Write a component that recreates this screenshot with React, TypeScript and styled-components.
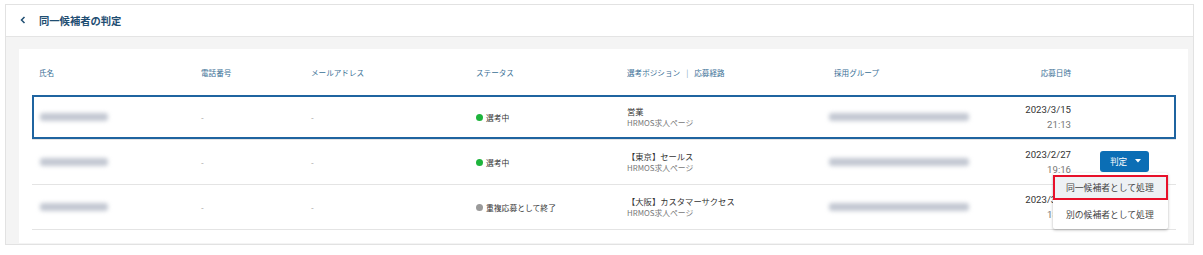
import styled, { createGlobalStyle } from "styled-components"

const GlobalStyle = createGlobalStyle`
  body {
    margin: 0;
    background: #ffffff;
    font-family: "Noto Sans CJK JP", "Noto Sans", sans-serif;
    color: #333;
  }
`

const Page = styled.div`
  padding: 4px 9px 0 5px;
  width: 1203px;
  box-sizing: border-box;
`

const Panel = styled.section`
  border: 1px solid #e2e2e2;
  background: #f4f4f4;
  height: 241px;
  box-sizing: border-box;
  display: flex;
  flex-direction: column;
`

const Header = styled.header`
  height: 32px;
  flex: none;
  background: #fff;
  border-bottom: 1px solid #e4e4e4;
  box-sizing: border-box;
  display: flex;
  align-items: center;
  padding-left: 13px;
  padding-bottom: 1px;
  gap: 12px;
`

const BackIcon = styled.svg`
  width: 8px;
  height: 8px;
`

const Title = styled.h1`
  margin: 0;
  font-size: 10.3px;
  font-weight: 700;
  color: #1f4e72;
`

const Body = styled.div`
  flex: 1;
  padding: 12px 5px 1px 13px;
  display: flex;
`

const Card = styled.div`
  flex: 1;
  background: #fff;
  padding: 0 12px 0 13px;
`

const cols = "162px 110px 165px 151px 199px 141px 104px 1fr"

const HeadRow = styled.div`
  display: grid;
  grid-template-columns: ${cols};
  padding-left: 7px;
  height: 46px;
  align-items: center;
`

const HeadCell = styled.div<{ $right?: boolean; $indent?: number }>`
  font-size: 7.6px;
  color: #3a6f96;
  text-align: ${p => (p.$right ? "right" : "left")};
  padding-left: ${p => p.$indent ?? 0}px;
`

const Sep = styled.span`
  margin: 0 6px;
  color: #7aa0bd;
`

const Row = styled.div<{ $selected?: boolean }>`
  position: relative;
  display: grid;
  grid-template-columns: ${cols};
  padding-left: 7px;
  height: 45px;
  align-items: center;
  box-sizing: border-box;
  border-bottom: 1px solid #e4e4e4;
  box-shadow: ${p => (p.$selected ? "inset 0 0 0 2px #1f64a0" : "none")};
`

const Blur = styled.div<{ $w: number }>`
  width: ${p => p.$w}px;
  height: 8px;
  background: #c3c8d2;
  border-radius: 3px;
  filter: blur(2.2px);
  margin-left: ${p => (p.$w > 100 ? "3px" : "1px")};
`

const Dash = styled.div`
  font-size: 8px;
  color: #9a9a9a;
`

const Status = styled.div<{ $done?: boolean }>`
  display: flex;
  align-items: center;
  gap: 3px;
  font-size: 7.8px;
  color: #333;
  &::before {
    content: "";
    width: 7px;
    height: 7px;
    border-radius: 50%;
    background: ${p => (p.$done ? "#9a9a9a" : "#1eb43c")};
  }
`

const Stack = styled.div<{ $right?: boolean }>`
  display: flex;
  flex-direction: column;
  align-items: ${p => (p.$right ? "flex-end" : "flex-start")};
`

const Main = styled.div`
  font-size: 8.3px;
  line-height: 11px;
  color: #333;
`

const Sub = styled.div`
  font-size: 7.8px;
  line-height: 11px;
  color: #777;
`

const DateMain = styled.div`
  font-family: Roboto, "Liberation Sans", sans-serif;
  font-size: 9.6px;
  line-height: 15px;
  color: #333;
`

const DateSub = styled(DateMain)`
  color: #777;
`

const Action = styled.div`
  position: relative;
  padding-left: 29px;
  align-self: stretch;
  display: flex;
  align-items: center;
`

const JudgeButton = styled.button`
  width: 49px;
  height: 21px;
  border: none;
  border-radius: 3px;
  background: #0b6eb5;
  color: #fff;
  font-family: "Noto Sans CJK JP", sans-serif;
  font-size: 8.6px;
  display: flex;
  align-items: center;
  justify-content: center;
  gap: 8px;
  padding: 0 0 0 2px;
  margin-top: -2px;
`

const Caret = styled.svg`
  width: 6px;
  height: 4px;
`

const Menu = styled.ul`
  position: absolute;
  top: 33px;
  left: -18px;
  width: 115px;
  margin: 0;
  padding: 2px 0 2px;
  list-style: none;
  background: #fff;
  border-radius: 2px;
  box-shadow: 0 1px 3px rgba(0, 0, 0, 0.3);
  z-index: 2;
`

const MenuItem = styled.li<{ $active?: boolean }>`
  height: 25px;
  box-sizing: border-box;
  display: flex;
  align-items: center;
  padding-left: ${p => (p.$active ? "11px" : "13px")};
  font-size: 8.8px;
  color: #444;
  background: ${p => (p.$active ? "#eef1f4" : "#fff")};
  border: ${p => (p.$active ? "2px solid #e8102a" : "none")};
  & + & {
    margin-top: 2px;
  }
`

type Candidate = {
  nameW: number
  status: string
  done?: boolean
  position: string
  date: string
  time: string
  selected?: boolean
  judge?: boolean
}

const rows: Candidate[] = [
  { nameW: 68, status: "選考中", position: "営業", date: "2023/3/15", time: "21:13", selected: true },
  { nameW: 68, status: "選考中", position: "【東京】セールス", date: "2023/2/27", time: "19:16", judge: true },
  { nameW: 68, status: "重複応募として終了", done: true, position: "【大阪】カスタマーサクセス", date: "2023/3/15", time: "18:02" },
]

export default function App() {
  return (
    <>
      <GlobalStyle />
      <Page>
        <Panel>
          <Header>
            <BackIcon viewBox="0 0 8 8">
              <path d="M5.5 1 L2.5 4 L5.5 7" fill="none" stroke="#1f4e72" strokeWidth="1.5" />
            </BackIcon>
            <Title>同一候補者の判定</Title>
          </Header>
          <Body>
            <Card>
              <HeadRow>
                <HeadCell>氏名</HeadCell>
                <HeadCell>電話番号</HeadCell>
                <HeadCell>メールアドレス</HeadCell>
                <HeadCell>ステータス</HeadCell>
                <HeadCell>
                  選考ポジション<Sep>|</Sep>応募経路
                </HeadCell>
                <HeadCell $indent={8}>採用グループ</HeadCell>
                <HeadCell $right>応募日時</HeadCell>
                <HeadCell />
              </HeadRow>
              {rows.map((r, i) => (
                <Row key={i} $selected={r.selected}>
                  <Blur $w={r.nameW} />
                  <Dash>-</Dash>
                  <Dash>-</Dash>
                  <Status $done={r.done}>{r.status}</Status>
                  <Stack>
                    <Main>{r.position}</Main>
                    <Sub>HRMOS求人ページ</Sub>
                  </Stack>
                  <Blur $w={140} />
                  <Stack $right>
                    <DateMain>{r.date}</DateMain>
                    <DateSub>{r.time}</DateSub>
                  </Stack>
                  <Action>
                    {r.judge && (
                      <>
                        <JudgeButton>
                          判定
                          <Caret viewBox="0 0 6 4">
                            <path d="M0 0 H6 L3 3.5 Z" fill="#fff" />
                          </Caret>
                        </JudgeButton>
                        <Menu>
                          <MenuItem $active>同一候補者として処理</MenuItem>
                          <MenuItem>別の候補者として処理</MenuItem>
                        </Menu>
                      </>
                    )}
                  </Action>
                </Row>
              ))}
            </Card>
          </Body>
        </Panel>
      </Page>
    </>
  )
}
